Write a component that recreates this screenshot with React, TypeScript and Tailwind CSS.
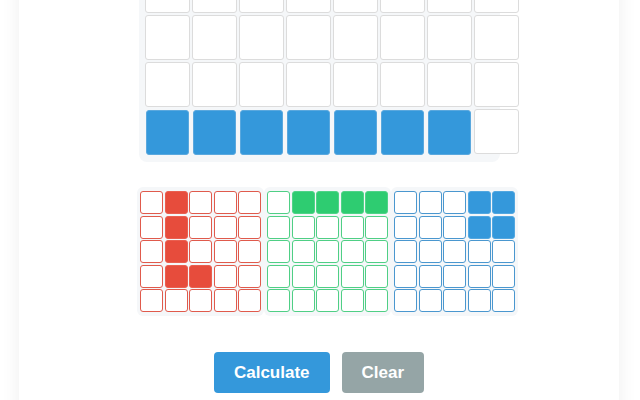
import React from 'react';

const BIG_ROWS = 4;
const BIG_COLS = 8;
const bigFilled = (r: number, c: number) => r === 3 && c < 7;

const panels = [
    {
        name: 'red',
        empty: 'border-[#e05a4c]',
        full: 'bg-[#e74c3c] border-[#e95f50]',
        filled: (r: number, c: number) => (c === 1 && r <= 3) || (r === 3 && c === 2),
    },
    {
        name: 'green',
        empty: 'border-[#4fcf85]',
        full: 'bg-[#2ecc71] border-[#4fd387]',
        filled: (r: number, c: number) => r === 0 && c >= 1,
    },
    {
        name: 'blue',
        empty: 'border-[#4a97cf]',
        full: 'bg-[#3498db] border-[#52a7e0]',
        filled: (r: number, c: number) => r <= 1 && c >= 3,
    },
];

export default function App() {
    return (
        <div className="h-[400px] overflow-hidden bg-white" style={{ fontFamily: '"Liberation Sans", Arial, sans-serif' }}>
            <div className="mx-[19px] mt-[-39px] w-[600px] bg-white pb-[40px] shadow-[0_0_18px_rgba(0,0,0,0.07)]">
                <div className="mx-auto w-[361px]">
                    {/* main grid */}
                    <div className="rounded-lg bg-[#f5f7f9] pt-[7px] pl-[6px] pb-[6px]">
                        <div className="grid w-[374px] grid-cols-[repeat(8,45px)] gap-[2px]">
                            {Array.from({ length: BIG_ROWS * BIG_COLS }).map((_, i) => {
                                const r = Math.floor(i / BIG_COLS);
                                const c = i % BIG_COLS;
                                return (
                                    <div
                                        key={i}
                                        className={
                                            bigFilled(r, c)
                                                ? 'h-[45px] rounded-[3px] border border-[#5aa8de] bg-[#3498db] m-[1px]'
                                                : 'h-[45px] rounded-[3px] border border-[#dcdcdc] bg-white'
                                        }
                                    />
                                );
                            })}
                        </div>
                    </div>

                    {/* small panels */}
                    <div className="mt-[25px] ml-[-1.5px] flex w-[381px]">
                        {panels.map((p) => (
                            <div key={p.name} className="rounded-md bg-[#f5f7f9] px-[3px] py-[4px]">
                                <div className="grid grid-cols-[repeat(5,23px)] gap-[1.5px]">
                                    {Array.from({ length: 25 }).map((_, i) => {
                                        const r = Math.floor(i / 5);
                                        const c = i % 5;
                                        return (
                                            <div
                                                key={i}
                                                className={`h-[23px] rounded-[3px] border ${
                                                    p.filled(r, c) ? p.full : `${p.empty} bg-white`
                                                }`}
                                            />
                                        );
                                    })}
                                </div>
                            </div>
                        ))}
                    </div>
                </div>

                {/* buttons */}
                <div className="mt-[36px] flex justify-center gap-[12px]">
                    <button className="h-[41px] rounded-[4px] bg-[#3498db] px-[20px] text-[17px] font-bold text-white">
                        Calculate
                    </button>
                    <button className="h-[41px] rounded-[4px] bg-[#95a5a6] px-[20px] text-[17px] font-bold text-white">
                        Clear
                    </button>
                </div>
            </div>
        </div>
    );
}
